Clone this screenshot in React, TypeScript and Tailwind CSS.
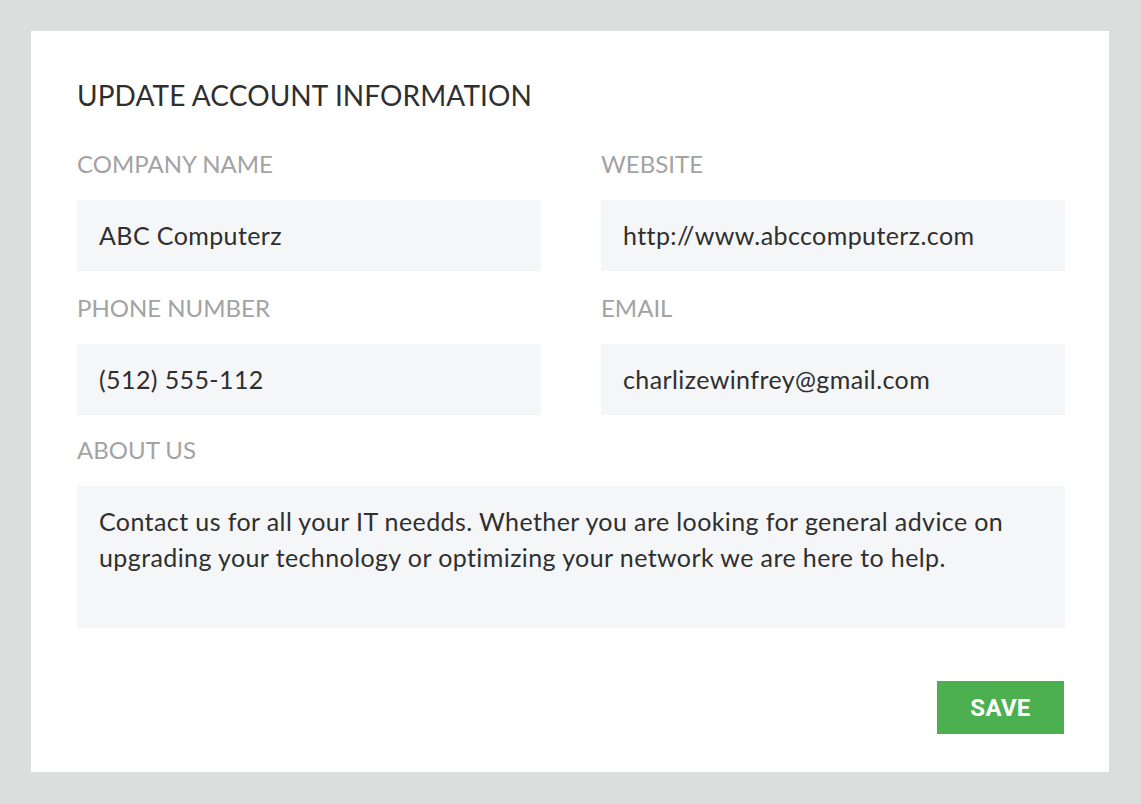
const font = { fontFamily: "Lato, 'Open Sans', sans-serif" };

function Field({ label, value }: { label: string; value: string }) {
  return (
    <div className="flex flex-col">
      <div className="h-[28px] leading-[28px] text-[24px] text-[#a3a3a3] uppercase">{label}</div>
      <div className="mt-[22px] h-[71px] bg-[#f5f6f8] px-[22px] flex items-center text-[25px] tracking-[0.4px] text-[#2f2f2f]">
        {value}
      </div>
    </div>
  );
}

export default function App() {
  return (
    <div className="w-[1141px] h-[804px] bg-[#dcdedd] pt-[31px] pl-[31px] pr-[32px] pb-[32px]" style={font}>
      <div className="h-full bg-white pl-[46px] pr-[44px] pt-[46px] flex flex-col">
        <h1 className="h-[36px] leading-[36px] text-[28px] tracking-[0.1px] text-[#2f2f2f]">
          UPDATE ACCOUNT INFORMATION
        </h1>
        <div className="mt-[37px] grid grid-cols-2 gap-x-[60px] gap-y-[23px]">
          <Field label="Company Name" value="ABC Computerz" />
          <Field label="Website" value="http://www.abccomputerz.com" />
          <Field label="Phone Number" value="(512) 555-112" />
          <Field label="Email" value="charlizewinfrey@gmail.com" />
        </div>
        <div className="mt-[21px] h-[28px] leading-[28px] text-[24px] text-[#a3a3a3]">ABOUT US</div>
        <div className="mt-[22px] h-[142px] bg-[#f5f6f8] px-[22px] pt-[17px] text-[25px] tracking-[0.4px] leading-[36px] text-[#2f2f2f]">
          Contact us for all your IT needds. Whether you are looking for general advice on upgrading your
          technology or optimizing your network we are here to help.
        </div>
        <div className="mt-[53px] flex justify-end pr-[1px]">
          <button
            className="w-[127px] h-[53px] bg-[#4caf50] text-white text-[24px] font-bold tracking-[0.3px]"
            style={{ fontFamily: "Roboto, 'Liberation Sans', sans-serif" }}
          >
            SAVE
          </button>
        </div>
      </div>
    </div>
  );
}
